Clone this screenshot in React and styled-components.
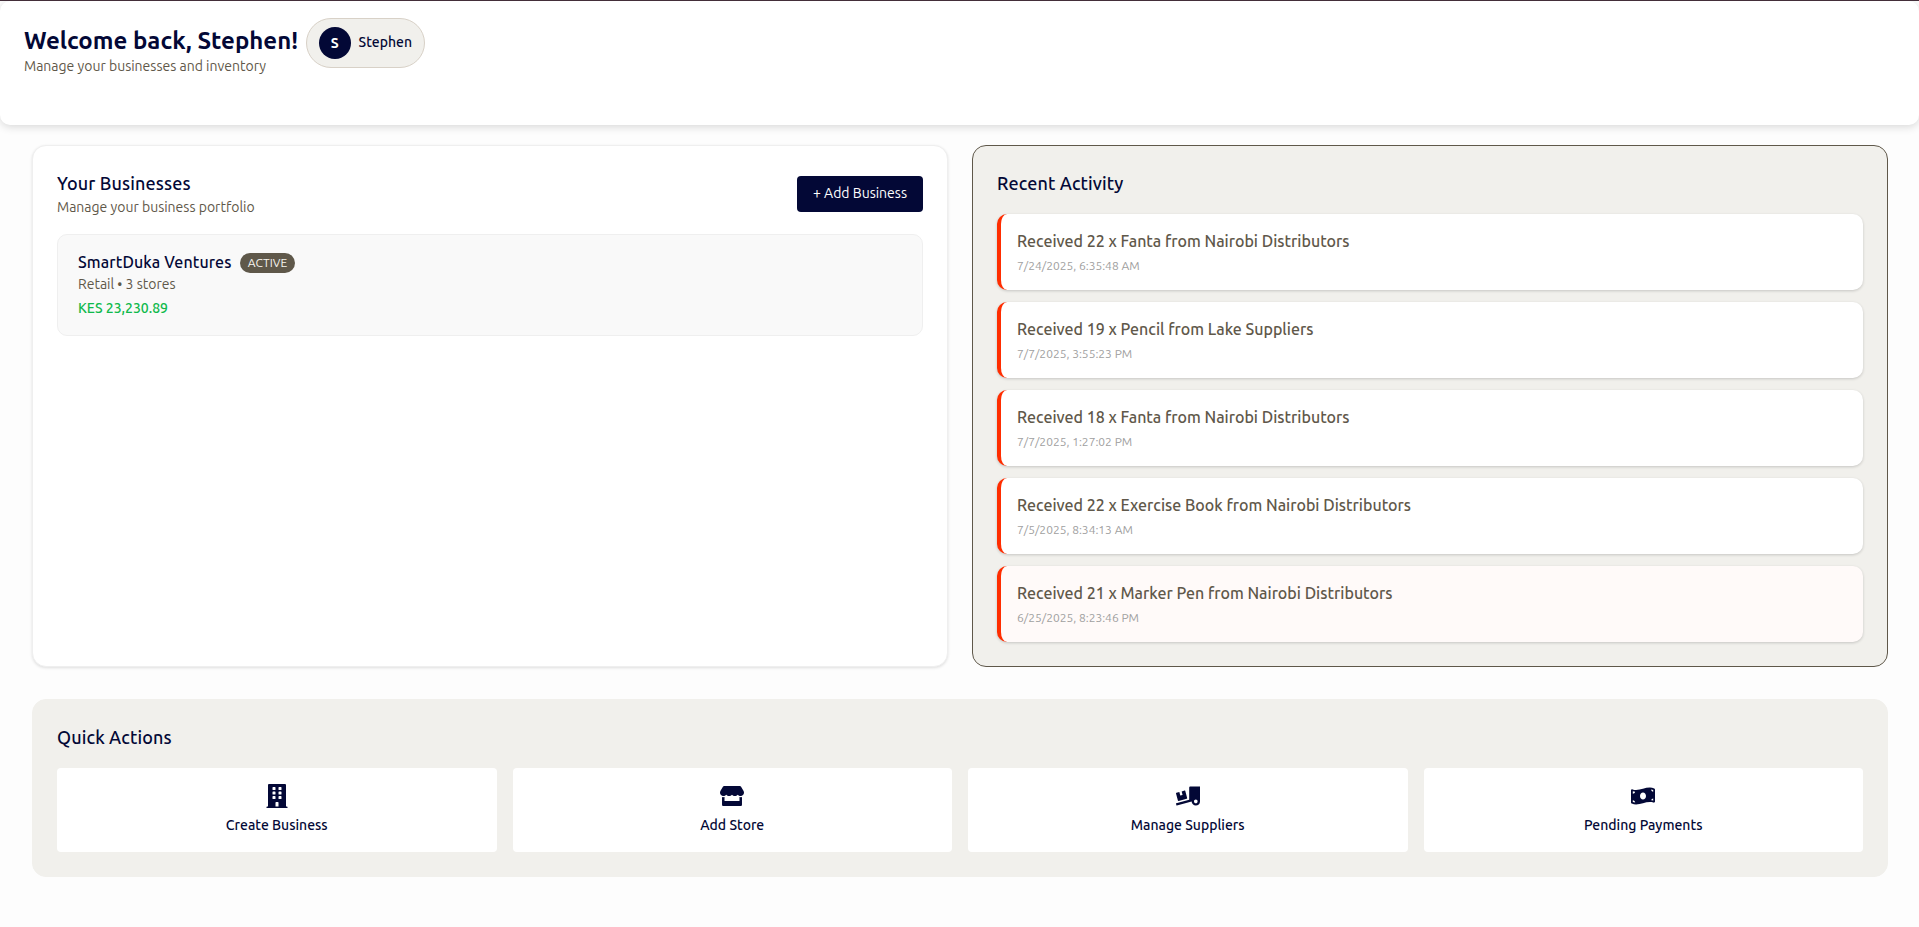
import React from "react";
import styled, { createGlobalStyle, css } from "styled-components";
import { FaBuilding, FaStore, FaTruckLoading, FaMoneyBillWave } from "react-icons/fa";

const navy = "#030836";
const olive = "#5f584a";
const sand = "#f1f0ec";

const GlobalStyle = createGlobalStyle`
  * { box-sizing: border-box; }
  body {
    margin: 0;
    background: #fdfdfd;
    color: ${navy};
    font-family: Ubuntu, "Noto Sans", "Open Sans", sans-serif;
  }
  h1, h2, h3, p { margin: 0; }
  button { font-family: inherit; }
`;

const Page = styled.div`
  height: 927px;
  border-top: 1px solid #46303c;
`;

const Header = styled.header`
  display: flex;
  align-items: flex-start;
  gap: 8px;
  height: 124px;
  padding: 17px 24px;
  background: #fff;
  border-radius: 10px;
  box-shadow: 0 2px 8px rgba(0, 0, 0, 0.15);
`;

const Greeting = styled.div`
  width: 274px;
  padding-top: 8px;
  white-space: nowrap;
`;

const Title = styled.h1`
  font-size: 24px;
  line-height: 30px;
  font-weight: 600;
`;

const Muted = styled.p`
  color: ${olive};
  font-size: 14px;
  line-height: ${(p) => (p.$tight ? 21 : 22)}px;
  font-weight: 400;
`;

const UserPill = styled.div`
  display: flex;
  align-items: center;
  gap: 8px;
  width: 119px;
  height: 50px;
  padding: 0 12px;
  border: 1px solid #d8d1c7;
  border-radius: 25px;
  background: ${sand};
  font-size: 14px;
  font-weight: 500;
`;

const UserName = styled.span`
  padding-bottom: 2px;
`;

const Avatar = styled.span`
  display: grid;
  place-items: center;
  width: 32px;
  height: 32px;
  padding-bottom: 1px;
  border-radius: 50%;
  background: ${navy};
  color: #fff;
  font-weight: 600;
`;

const Main = styled.main`
  display: grid;
  grid-template-columns: 1fr 1fr;
  gap: 32px 24px;
  padding: 20px 31px 0 32px;
`;

const Panel = styled.section`
  padding: 24px;
  border: 1px solid #efefef;
  border-radius: 14px;
  background: #fff;
  ${(p) => p.$raised && css`box-shadow: 0 1px 3px rgba(0, 0, 0, 0.12);`}
  ${(p) => p.$sand && css`background: ${sand}; border-color: ${p.$outlined ? olive : sand};`}
  ${(p) => p.$wide && css`grid-column: 1 / -1; height: 178px;`}
`;

const PanelHead = styled.div`
  display: flex;
  justify-content: space-between;
  height: 64px;
`;

const PanelTitle = styled.h2`
  font-size: 18px;
  line-height: 26px;
  font-weight: 500;
  letter-spacing: 0.12px;
`;

const AddButton = styled.button`
  width: 126px;
  height: 36px;
  margin-top: 6px;
  padding: 0 0 2px;
  border: 0;
  border-radius: 4px;
  background: ${navy};
  color: #fff;
  font-size: 14px;
  font-weight: 400;
  white-space: nowrap;
`;

const Business = styled.article`
  height: 102px;
  padding: 16px 20px;
  border: 1px solid #efefef;
  border-radius: 10px;
  background: #f9f9f9;
`;

const BusinessTop = styled.div`
  display: flex;
  align-items: center;
  gap: 9px;
  height: 22px;
`;

const BusinessName = styled.h3`
  width: 153px;
  font-size: 16px;
  line-height: 22px;
  font-weight: 500;
  letter-spacing: 0.12px;
  white-space: nowrap;
`;

const Badge = styled.span`
  display: grid;
  place-items: center;
  width: 55px;
  height: 20px;
  margin-top: 2px;
  padding-bottom: 1px;
  border-radius: 10px;
  background: ${olive};
  color: #f6f4ee;
  font-size: 12px;
`;

const Revenue = styled.p`
  margin-top: 1px;
  color: #10b94c;
  font-size: 14px;
  line-height: 24px;
  font-weight: 500;
`;

const Feed = styled.div`
  display: grid;
  gap: 12px;
  margin-top: 18px;
`;

const Activity = styled.article`
  height: 76px;
  padding: 14px 16px;
  border-left: 4px solid #ff2d00;
  border-radius: 10px;
  background: ${(p) => (p.$tinted ? "#fffaf9" : "#fff")};
  box-shadow: 0 1px 3px rgba(0, 0, 0, 0.18);
`;

const ActivityText = styled.p`
  color: ${olive};
  font-size: 16px;
  line-height: 26px;
  font-weight: 500;
`;

const ActivityTime = styled.p`
  color: #a0a0a0;
  font-size: 12px;
  line-height: 24px;
`;

const Actions = styled.div`
  display: grid;
  grid-template-columns: repeat(4, 1fr);
  gap: 16px;
  margin-top: 18px;
`;

const Action = styled.button`
  display: flex;
  flex-direction: column;
  align-items: center;
  gap: 7px;
  height: 84px;
  padding: 16px 0 0;
  border: 0;
  border-radius: 4px;
  background: #fff;
  color: ${navy};
  font-size: 14px;
  line-height: 21px;
  font-weight: 500;
  svg { width: 24px; height: 24px; }
`;

const activities = [
  ["Received 22 x Fanta from Nairobi Distributors", "7/24/2025, 6:35:48 AM"],
  ["Received 19 x Pencil from Lake Suppliers", "7/7/2025, 3:55:23 PM"],
  ["Received 18 x Fanta from Nairobi Distributors", "7/7/2025, 1:27:02 PM"],
  ["Received 22 x Exercise Book from Nairobi Distributors", "7/5/2025, 8:34:13 AM"],
  ["Received 21 x Marker Pen from Nairobi Distributors", "6/25/2025, 8:23:46 PM"],
];

const actions = [
  [FaBuilding, "Create Business"],
  [FaStore, "Add Store"],
  [FaTruckLoading, "Manage Suppliers"],
  [FaMoneyBillWave, "Pending Payments"],
];

export default function App() {
  return (
    <Page>
      <GlobalStyle />
      <Header>
        <Greeting>
          <Title>Welcome back, Stephen!</Title>
          <Muted $tight>Manage your businesses and inventory</Muted>
        </Greeting>
        <UserPill><Avatar>S</Avatar><UserName>Stephen</UserName></UserPill>
      </Header>
      <Main>
        <Panel $raised>
          <PanelHead>
            <div>
              <PanelTitle>Your Businesses</PanelTitle>
              <Muted>Manage your business portfolio</Muted>
            </div>
            <AddButton>+ Add Business</AddButton>
          </PanelHead>
          <Business>
            <BusinessTop>
              <BusinessName>SmartDuka Ventures</BusinessName>
              <Badge>ACTIVE</Badge>
            </BusinessTop>
            <Muted>Retail • 3 stores</Muted>
            <Revenue>KES 23,230.89</Revenue>
          </Business>
        </Panel>
        <Panel $sand $outlined>
          <PanelTitle>Recent Activity</PanelTitle>
          <Feed>
            {activities.map(([text, time], i) => (
              <Activity key={text} $tinted={i === activities.length - 1}>
                <ActivityText>{text}</ActivityText>
                <ActivityTime>{time}</ActivityTime>
              </Activity>
            ))}
          </Feed>
        </Panel>
        <Panel $sand $wide>
          <PanelTitle>Quick Actions</PanelTitle>
          <Actions>
            {actions.map(([Icon, label]) => (
              <Action key={label}><Icon />{label}</Action>
            ))}
          </Actions>
        </Panel>
      </Main>
    </Page>
  );
}
